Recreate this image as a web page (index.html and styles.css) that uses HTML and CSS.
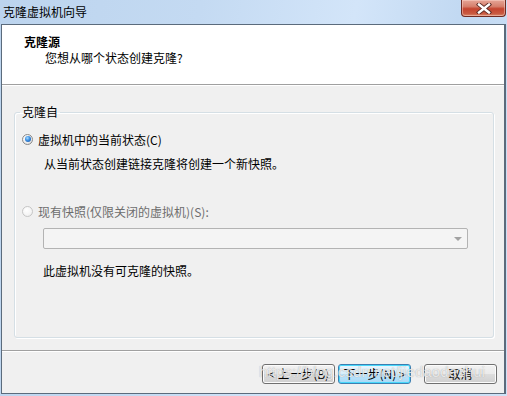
FILE: index.html
```html
<!DOCTYPE html>
<html lang="zh-CN">
<head>
<meta charset="utf-8">
<title>克隆虚拟机向导</title>
<link rel="stylesheet" href="styles.css">
</head>
<body>
<div class="window">
  <div class="titlebar">
    <span class="title-text">克隆虚拟机向导</span>
    <button class="close-btn" aria-label="关闭">
      <svg width="16" height="11" viewBox="0 0 16 11">
        <path d="M3 1.5 L13 9.5 M13 1.5 L3 9.5" stroke="#5a2a24" stroke-width="4.2" stroke-linecap="square" fill="none"/>
        <path d="M3 1.5 L13 9.5 M13 1.5 L3 9.5" stroke="#ffffff" stroke-width="2.4" stroke-linecap="square" fill="none"/>
      </svg>
    </button>
  </div>
  <div class="client">
    <div class="header">
      <div class="header-title">克隆源</div>
      <div class="header-sub">您想从哪个状态创建克隆?</div>
    </div>
    <div class="body">
      <fieldset class="group">
        <legend class="group-title">克隆自</legend>
        <div class="group-inner">
          <div class="radio-row">
            <span class="radio checked"><span class="dot"></span></span>
            <span class="radio-label">虚拟机中的当前状态(C)</span>
          </div>
          <div class="desc">从当前状态创建链接克隆将创建一个新快照。</div>
          <div class="radio-row row2 disabled">
            <span class="radio"></span>
            <span class="radio-label">现有快照(仅限关闭的虚拟机)(S):</span>
          </div>
          <div class="combo">
            <span class="combo-arrow"></span>
          </div>
          <div class="note">此虚拟机没有可克隆的快照。</div>
        </div>
      </fieldset>
    </div>
    <div class="buttonbar">
      <button class="btn">&lt; 上一步(B)</button>
      <button class="btn default">下一步(N) &gt;</button>
      <button class="btn cancel">取消</button>
      <span class="watermark">https://blog.csdn.net/jiedaodezhui</span>
    </div>
  </div>
</div>
</body>
</html>
```

FILE: styles.css
```css
* { box-sizing: border-box; }
html, body { margin: 0; padding: 0; }
body {
  width: 507px;
  height: 396px;
  overflow: hidden;
  font-family: "Noto Sans CJK SC", "Microsoft YaHei", sans-serif;
  font-size: 12px;
  color: #000;
  background: #c4daf2;
}
.window {
  width: 507px;
  height: 396px;
  background: linear-gradient(100deg, #bcd4ee 0%, #c4daf2 35%, #d3e5f9 62%, #c2d9f2 80%, #cfe2f7 100%);
}
.titlebar {
  height: 24px;
  display: flex;
  align-items: flex-start;
  justify-content: space-between;
}
.title-text {
  margin: 4px 0 0 3px;
  line-height: 16px;
  font-size: 12px;
  color: #000;
}
.close-btn {
  width: 45px;
  height: 17px;
  margin-right: 1px;
  padding: 0;
  border: 1px solid #6e2a22;
  border-top: none;
  border-radius: 0 0 4px 4px;
  background: linear-gradient(180deg, #e6a597 0%, #d6806d 40%, #c4442f 55%, #c95a41 85%, #d98a6e 100%);
  box-shadow: inset 0 0 0 1px rgba(255,220,210,0.45);
  display: flex;
  align-items: center;
  justify-content: center;
}
.close-btn svg { display: block; }
.client {
  margin-left: 1px;
  width: 505px;
  height: 370px;
  border: 1px solid #5b6b7c;
  border-right-width: 2px;
  background: #f0f0f0;
  display: flex;
  flex-direction: column;
}
.header {
  height: 60px;
  background: #fff;
  border-bottom: 1px solid #a0a0a0;
  box-shadow: 0 1px 0 #ffffff;
  padding: 10px 0 0 22px;
}
.header-title {
  font-weight: bold;
  line-height: 14px;
}
.header-sub {
  margin: 2px 0 0 21px;
  line-height: 14px;
}
.body {
  height: 265px;
  padding: 19px 0 0 12px;
  border-bottom: 1px solid #a0a0a0;
  margin-top: 1px;
}
.group {
  margin: 0;
  padding: 0;
  width: 480px;
  height: 233px;
  border: 1px solid #d5dfe5;
  border-radius: 3px;
  box-shadow: inset 1px 1px 0 #ffffff, 1px 1px 0 #ffffff;
}
.group-title {
  margin-left: 5px;
  padding: 0 2px;
  line-height: 14px;
  font-size: 12px;
}
.group-inner {
  padding: 12px 0 0 7px;
  display: flex;
  flex-direction: column;
}
.radio-row {
  display: flex;
  align-items: center;
  height: 16px;
  gap: 5px;
}
.radio {
  width: 11px;
  height: 11px;
  border-radius: 50%;
  border: 1px solid #8a8a8a;
  background: radial-gradient(circle at 40% 35%, #ffffff 0%, #eeeeee 55%, #d0d0d0 100%);
  display: flex;
  align-items: center;
  justify-content: center;
  flex: none;
}
.radio .dot {
  width: 6px;
  height: 6px;
  border-radius: 50%;
  background: radial-gradient(circle at 40% 35%, #a8dcff 0%, #3a8de0 45%, #164b9a 100%);
}
.desc {
  margin: 10px 0 0 22px;
  line-height: 14px;
}
.row2 { margin-top: 32px; }
.disabled .radio {
  border-color: #c6c6c6;
  background: radial-gradient(circle at 40% 35%, #ffffff 0%, #f4f4f4 60%, #e6e6e6 100%);
}
.disabled .radio-label { color: #6d6d6d; }
.combo {
  margin: 9px 0 0 21px;
  width: 425px;
  height: 21px;
  border: 1px solid #b3b3b3;
  border-radius: 2px;
  background: #f4f4f4;
  display: flex;
  align-items: center;
  justify-content: flex-end;
  padding-right: 5px;
}
.combo-arrow {
  width: 0;
  height: 0;
  border-left: 4px solid transparent;
  border-right: 4px solid transparent;
  border-top: 4px solid #a2a2a2;
}
.note {
  margin: 15px 0 0 21px;
  line-height: 14px;
}
.buttonbar {
  position: relative;
  flex: 1;
  border-top: 1px solid #ffffff;
  display: flex;
  align-items: flex-start;
  padding: 12px 0 0 260px;
}
.btn {
  width: 73px;
  height: 20px;
  padding: 0;
  font-family: "Noto Sans CJK SC", "Microsoft YaHei", sans-serif;
  font-size: 12px;
  line-height: 16px;
  color: #000;
  border: 1px solid #707070;
  border-radius: 3px;
  background: linear-gradient(180deg, #f2f2f2 0%, #ebebeb 48%, #dddddd 52%, #cfcfcf 100%);
  box-shadow: inset 0 0 0 1px #fcfcfc;
}
.btn + .btn { margin-left: 3px; }
.btn.default {
  border-color: #3c7fb1;
  box-shadow: inset 0 0 0 1px #48d8fb;
  background: linear-gradient(180deg, #eaf6fd 0%, #d9f0fc 48%, #bee6fd 52%, #a7d9f5 100%);
}
.btn.cancel { margin-left: 13px; }
.watermark {
  position: absolute;
  left: 257px;
  top: 11px;
  font-family: "Liberation Sans", Arial, sans-serif;
  font-size: 15px;
  letter-spacing: 0.1px;
  color: rgba(255,255,255,0.75);
  text-shadow: 0 0 1px rgba(120,120,120,0.7);
  pointer-events: none;
  white-space: nowrap;
}
```
